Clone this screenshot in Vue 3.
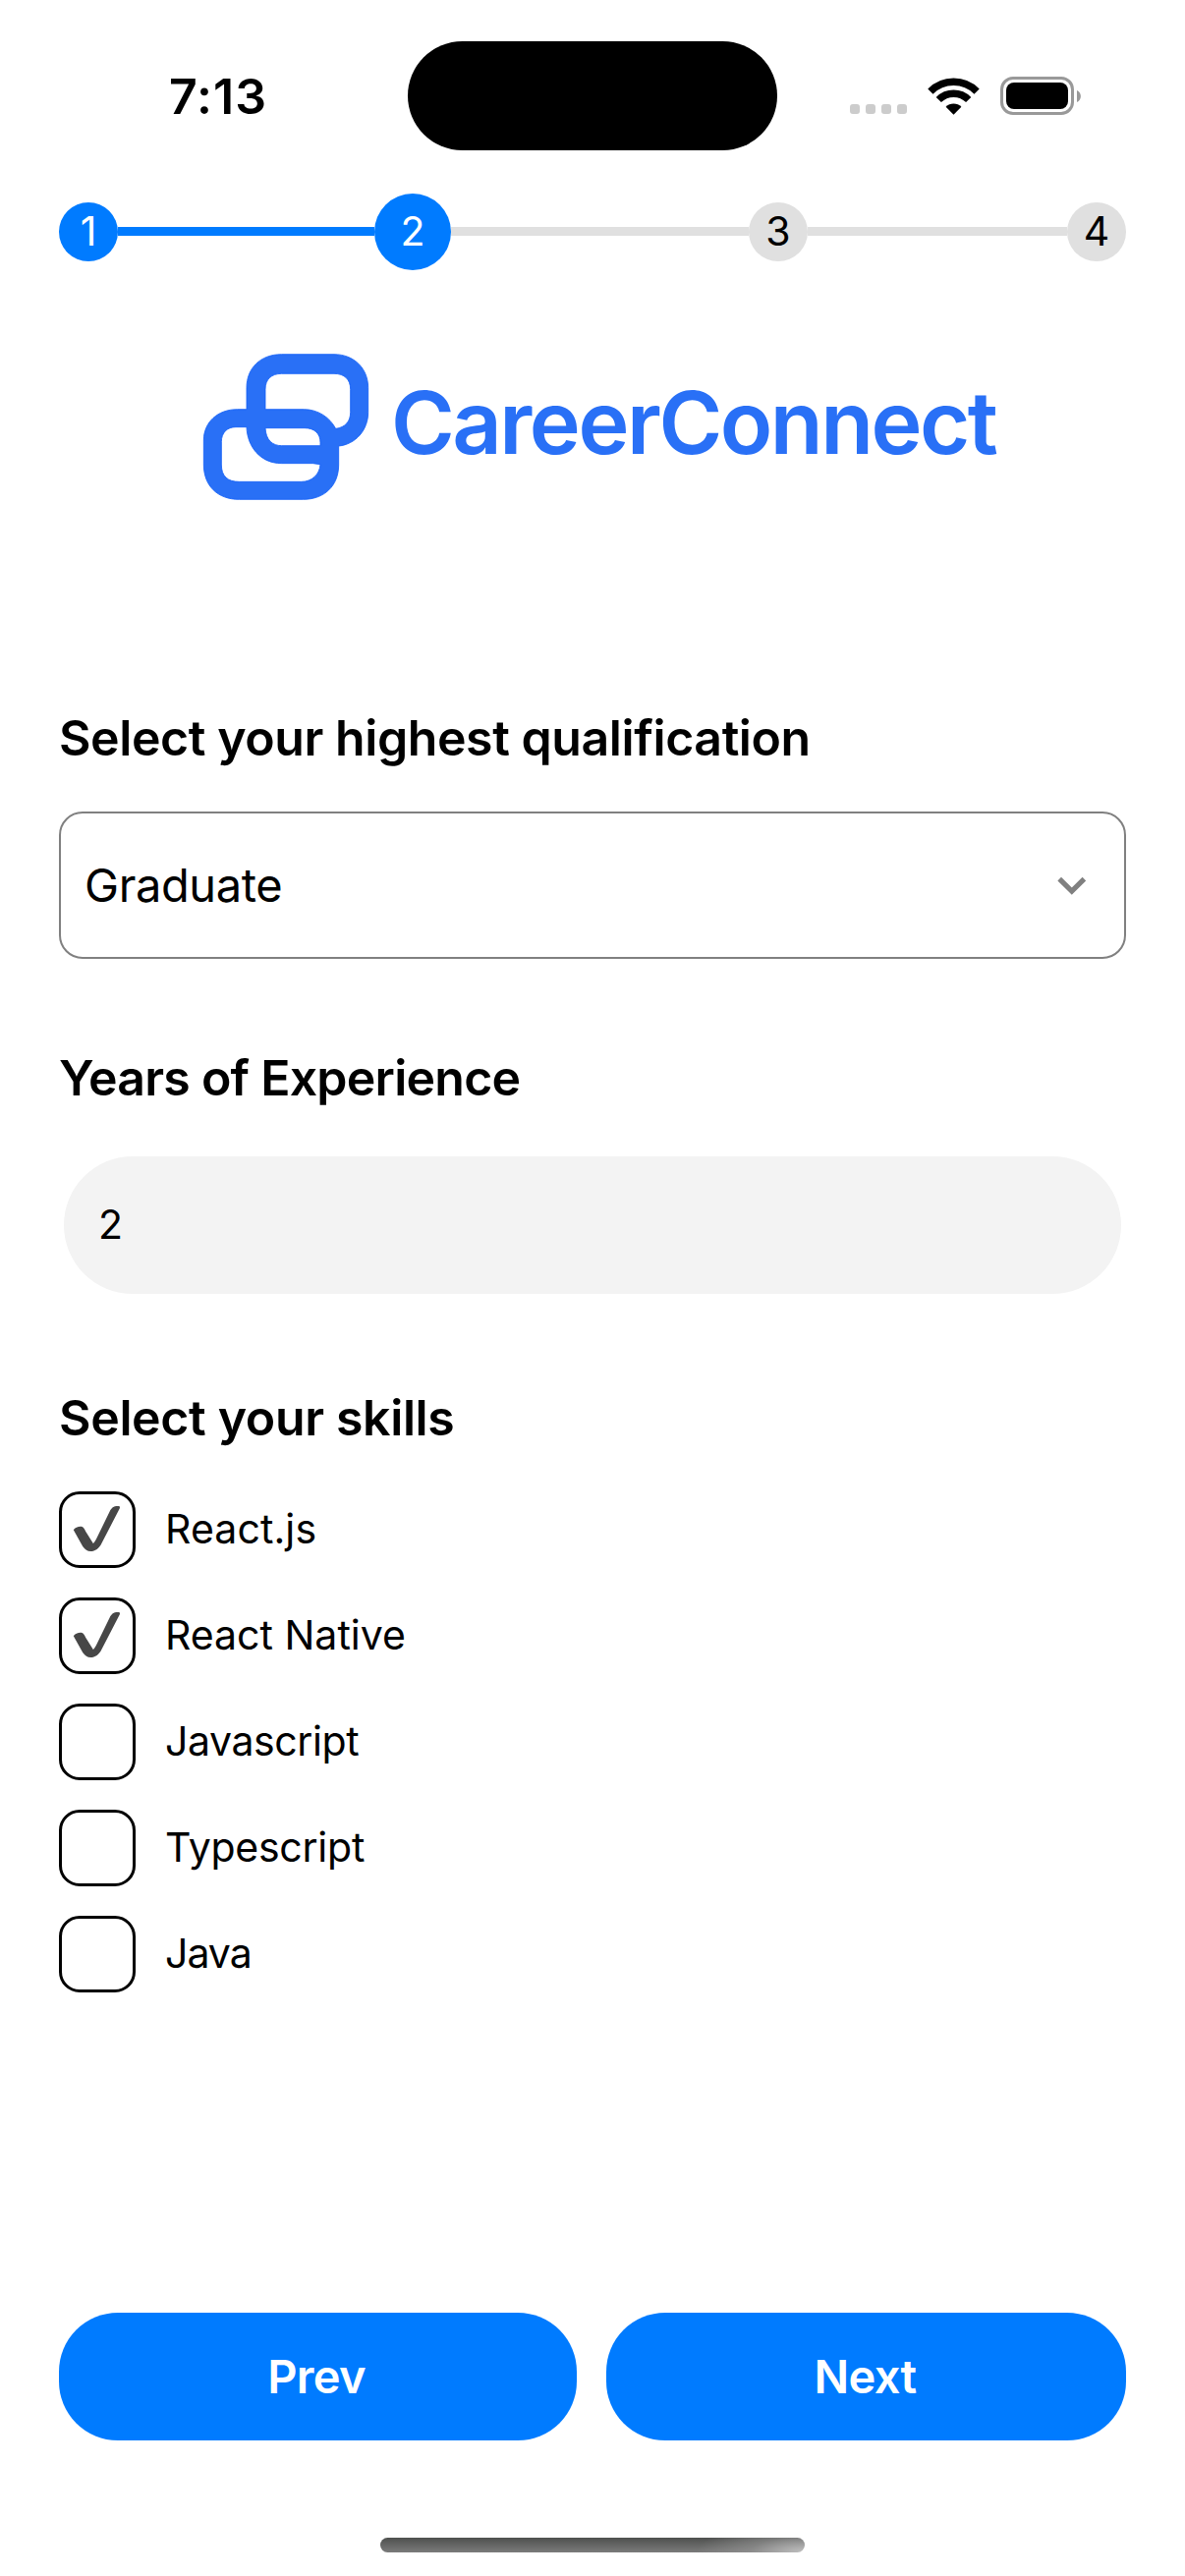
<script setup>
import { ref } from 'vue'

const steps = [
  { n: 1, state: 'done', line: 261 },
  { n: 2, state: 'current', line: 303 },
  { n: 3, state: 'todo', line: 264 },
  { n: 4, state: 'todo', line: 0 }
]

const skills = ref([
  { name: 'React.js', checked: true, tracking: 0.1 },
  { name: 'React Native', checked: true, tracking: 0 },
  { name: 'Javascript', checked: false, tracking: -0.4 },
  { name: 'Typescript', checked: false, tracking: -0.25 },
  { name: 'Java', checked: false, tracking: -1 }
])
</script>

<template>
  <div class="screen">
    <header class="status">
      <span class="time">7:13</span>
      <span class="island"></span>
      <span class="dots"><i v-for="d in 4" :key="d"></i></span>
      <svg class="wifi" viewBox="0 0 54 40">
        <g fill="none" stroke="#000">
          <path d="M3.9 15.1A33.3 33.3 0 0 1 51.1 15.1" stroke-width="7.4" />
          <path d="M12.3 23.5A21.5 21.5 0 0 1 42.7 23.5" stroke-width="7.4" />
        </g>
        <path d="M27.5 38.7L19.6 30.8A11.2 11.2 0 0 1 35.4 30.8Z" />
      </svg>
      <span class="battery"><i></i></span>
      <svg class="nub" viewBox="0 0 4 12"><path d="M0 0C5.2 2.2 5.2 9.8 0 12Z" fill="#999" /></svg>
    </header>

    <nav class="stepper">
      <template v-for="s in steps" :key="s.n">
        <span class="step" :class="s.state">{{ s.n }}</span>
        <span v-if="s.line" class="line" :class="s.state" :style="{ flexGrow: s.line }"></span>
      </template>
    </nav>

    <div class="brand">
      <svg class="mark" viewBox="48 58 510 453">
        <path
          fill="#2970f6"
          stroke="#1560f6"
          stroke-width="2.5"
          fill-rule="evenodd"
          d="M183 231V165C183 105 225 63 290 63H450C510 63 554 105 554 165V240C554 295 515 338 464 343V400C464 465 420 506 355 506H160C95 506 52 465 52 400V325C52 270 95 231 155 231Z
             M240 231V170C240 140 258 122 290 122H450C482 122 500 140 500 170V240C500 268 484 286 455 290C437 255 400 231 358 231Z
             M240 288H360C390 288 408 305 408 332V342H290C262 342 242 325 240 288Z
             M150 285H183C185 345 225 396 290 396H385L408 399C406 430 382 452 350 452H160C125 452 106 435 106 400V330C106 302 124 285 150 285Z"
        />
      </svg>
      <span class="wordmark">CareerConnect</span>
    </div>

    <main class="form">
      <h2 class="q">Select your highest qualification</h2>
      <div class="select">
        <span>Graduate</span>
        <svg class="chevron" viewBox="0 0 30 20">
          <path d="M2.2 2.6L14.8 15L27.4 2.6" fill="none" stroke="#808080" stroke-width="5.2" />
        </svg>
      </div>

      <h2 class="years">Years of Experience</h2>
      <div class="input">2</div>

      <h2 class="skills-title">Select your skills</h2>
      <ul class="skills">
        <li v-for="s in skills" :key="s.name" @click="s.checked = !s.checked">
          <span class="box">
            <svg v-if="s.checked" class="tick" viewBox="102 126 146 144">
              <path
                fill="#474747"
                d="M104 202C108 194 122 190 130 192C134 193 137 198 141 206L164 243C168 240 172 232 176 224L214 146C220 133 228 128 242 129C246 129 246 132 245 136L190 242C182 258 170 267 156 267C146 267 140 262 132 252Z"
              />
            </svg>
          </span>
          <span class="label" :style="{ letterSpacing: s.tracking + 'px' }">{{ s.name }}</span>
        </li>
      </ul>
    </main>

    <footer class="actions">
      <button class="prev">Prev</button>
      <button class="next">Next</button>
    </footer>
    <div class="home"></div>
  </div>
</template>

<style>
body {
  margin: 0;
  background: #fff;
}
</style>

<style scoped>
.screen {
  box-sizing: border-box;
  display: flex;
  flex-direction: column;
  width: 1206px;
  height: 2622px;
  background: #fff;
  color: #000;
  font-family: Inter, "Liberation Sans", sans-serif;
}
.status {
  display: flex;
  align-items: center;
  height: 196px;
  box-sizing: border-box;
  padding-left: 172px;
}
.time {
  width: 243px;
  font-size: 50px;
  line-height: 60px;
  font-weight: 600;
  letter-spacing: 1px;
}
.island {
  width: 376px;
  height: 111px;
  border-radius: 56px;
  background: #000;
  margin-top: -2px;
}
.dots {
  display: flex;
  gap: 6px;
  margin: 26px 0 0 74px;
}
.dots i {
  width: 10px;
  height: 10px;
  border-radius: 3px;
  background: #ccc;
}
.wifi {
  width: 54px;
  height: 40px;
  margin: -1px 0 0 20px;
}
.battery {
  box-sizing: border-box;
  width: 75px;
  height: 39px;
  margin: -1px 0 0 21px;
  padding: 3px;
  border: 3px solid #999;
  border-radius: 13px;
}
.battery i {
  display: block;
  height: 27px;
  border-radius: 8px;
  background: #000;
}
.nub {
  width: 4px;
  height: 12px;
  margin-left: 3px;
}
.stepper {
  display: flex;
  align-items: center;
  height: 80px;
  padding: 0 60px;
}
.step {
  width: 60px;
  height: 60px;
  flex: none;
  border-radius: 50%;
  text-align: center;
  font-size: 41px;
  line-height: 59px;
  background: #e0e0e0;
}
.step.done,
.step.current {
  background: #007bff;
  color: #fff;
}
.step.current {
  width: 78px;
  height: 78px;
  line-height: 77px;
}
.line {
  flex: 1 1 0;
  height: 9px;
  margin-top: -1px;
  background: #e0e0e0;
}
.line.done {
  background: #007bff;
}
.brand {
  display: flex;
  align-items: center;
  height: 151px;
  margin: 83px 0 0 206px;
}
.mark {
  width: 170px;
  height: 151px;
}
.wordmark {
  margin: -9px 0 0 22px;
  font-size: 88px;
  line-height: 100px;
  font-weight: 600;
  letter-spacing: -2.5px;
  color: #2970f6;
}
.form {
  display: flex;
  flex-direction: column;
  padding: 211px 60px 0;
}
h2 {
  margin: 0;
  font-size: 50px;
  line-height: 60px;
  font-weight: 600;
}
.q {
  letter-spacing: -0.42px;
}
.select {
  display: flex;
  align-items: center;
  justify-content: space-between;
  box-sizing: border-box;
  height: 150px;
  margin-top: 45px;
  padding: 0 38px 0 24px;
  border: 2px solid #808080;
  border-radius: 24px;
  font-size: 47px;
  letter-spacing: -0.4px;
}
.select span {
  padding-bottom: 2px;
}
.chevron {
  width: 30px;
  height: 20px;
  margin-top: 2px;
}
.years {
  margin-top: 91px;
  letter-spacing: -0.75px;
}
.input {
  height: 140px;
  margin: 50px 5px 0;
  padding-left: 35px;
  border-radius: 70px;
  background: #f3f3f3;
  font-size: 41px;
  line-height: 139px;
}
.skills-title {
  margin-top: 96px;
  letter-spacing: -0.35px;
}
.skills {
  display: flex;
  flex-direction: column;
  gap: 30px;
  margin: 45px 0 0;
  padding: 0;
  list-style: none;
}
.skills li {
  display: flex;
  align-items: center;
  gap: 30px;
  height: 78px;
  font-size: 41px;
}
.label {
  line-height: 60px;
  padding-bottom: 2px;
}
.box {
  display: flex;
  box-sizing: border-box;
  width: 78px;
  height: 78px;
  padding: 11px 0 0 11px;
  border: 3px solid #000;
  border-radius: 21px;
}
.tick {
  width: 49px;
  height: 48px;
}
.actions {
  display: flex;
  gap: 30px;
  margin-top: auto;
  padding: 0 60px;
}
.actions button {
  height: 130px;
  padding: 0;
  border: 0;
  border-radius: 60px;
  background: #007bff;
  color: #fff;
  font: 600 47px/130px Inter, "Liberation Sans", sans-serif;
  letter-spacing: -0.7px;
}
.actions .prev {
  width: 527px;
  padding-right: 3px;
}
.actions .next {
  width: 529px;
  padding-right: 2px;
}
.home {
  width: 432px;
  height: 15px;
  margin: 99px auto 24px;
  border-radius: 8px;
  background:
    radial-gradient(ellipse 110px 32px at 100% 100%, #c0c0c0, rgba(155, 155, 155, 0.55) 50%, transparent),
    linear-gradient(#4e504e, #7b7b7b);
}
</style>
